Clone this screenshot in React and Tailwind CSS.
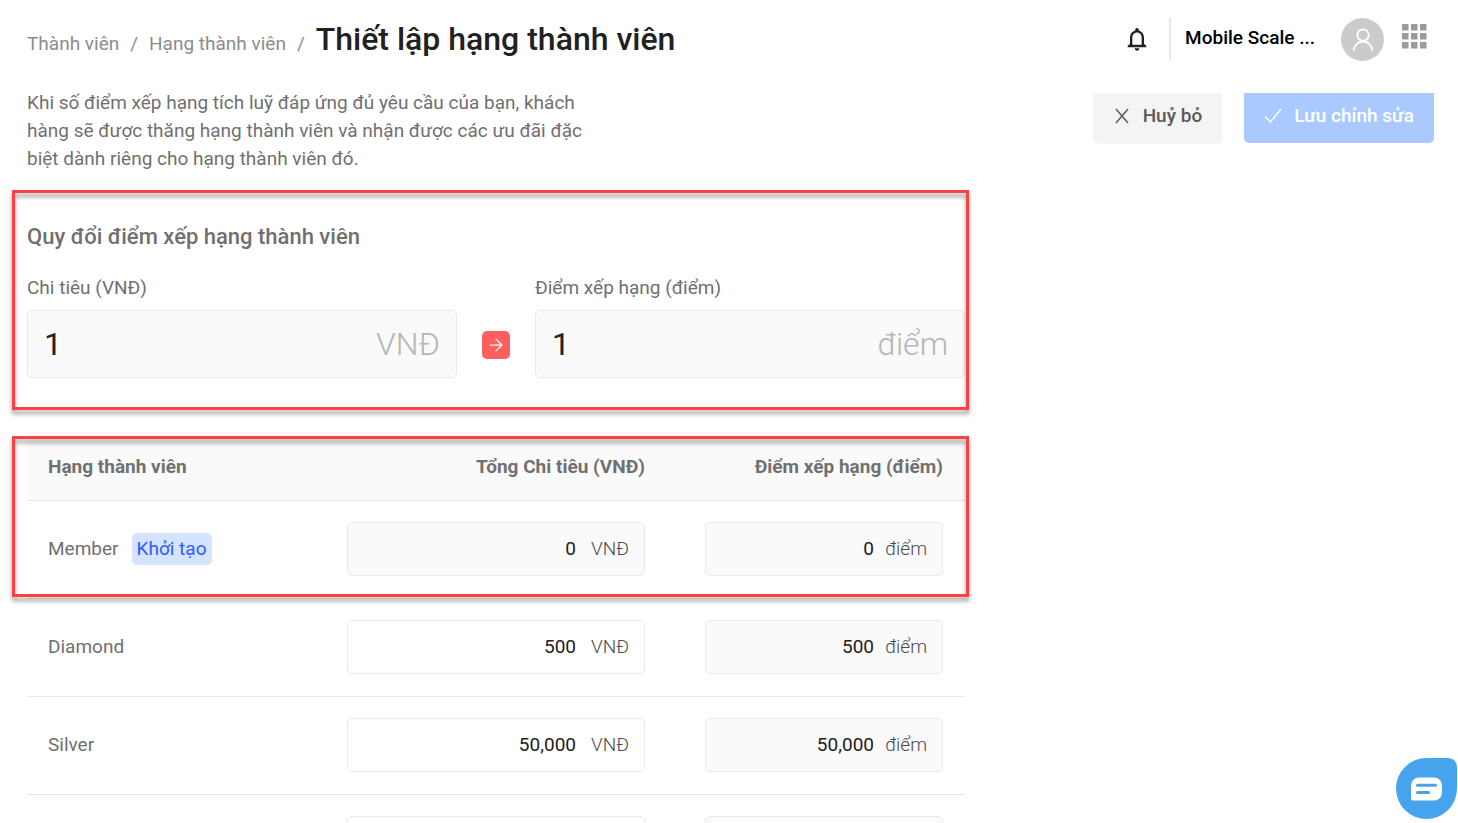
import { ArrowRight } from "lucide-react";
import { MdNotificationsNone } from "react-icons/md";

const tiers = [
  { id: "member", name: "Member", amount: "0", points: "0", initial: true },
  { id: "diamond", name: "Diamond", amount: "500", points: "500" },
  { id: "silver", name: "Silver", amount: "50,000", points: "50,000" },
  // blank row for the next tier
  { id: "new", name: "", amount: "", points: "" },
];

function Highlight({ className }) {
  return (
    <div
      aria-hidden="true"
      className={`pointer-events-none absolute border-3 border-[#ff4040] drop-shadow-[0_4px_2px_rgba(0,0,0,0.4)] ${className}`}
    />
  );
}

function AppsIcon() {
  const cells = [0, 9, 18];
  return (
    <svg width="25" height="25" viewBox="0 0 25 25" fill="#9b9b9b">
      {cells.map((y) =>
        cells.map((x) => <rect key={`${x}-${y}`} x={x} y={y} width="6.5" height="6.5" />)
      )}
    </svg>
  );
}

function Header() {
  return (
    <header className="flex items-start justify-between pl-[27px] pr-[31px] pt-[18px]">
      <nav className="flex items-baseline gap-[11px] text-[19px] text-[#8c8c8c]">
        <a href="#">Thành viên</a>
        <span>/</span>
        <a href="#">Hạng thành viên</a>
        <span>/</span>
        <h1 className="text-[32px] leading-[42px] font-medium text-[#212121]">
          Thiết lập hạng thành viên
        </h1>
      </nav>
      <div className="flex items-center">
        <button type="button" aria-label="Thông báo" className="pb-0.5">
          <MdNotificationsNone className="size-7 text-[#212121]" />
        </button>
        <div className="ml-[18px] h-[43px] w-0.5 bg-[#e8e8e8]" />
        <span className="ml-3.5 text-[19px] leading-7 font-medium text-black pb-1">
          Mobile Scale ...
        </span>
        <button
          type="button"
          aria-label="Tài khoản"
          className="ml-[26px] flex size-[43px] items-center justify-center rounded-full bg-[#cbcbcb] text-white"
        >
          <svg width="22" height="24" viewBox="0 0 22 24" fill="none" stroke="white" strokeWidth="1.8">
            <circle cx="11" cy="7" r="5.700" />
            <path d="M1.500 23a9.500 9.500 0 0 1 19 0" />
          </svg>
        </button>
        <button type="button" aria-label="Ứng dụng" className="ml-[18px] pb-1.5">
          <AppsIcon />
        </button>
      </div>
    </header>
  );
}

function Actions() {
  return (
    <div className="mt-1 flex shrink-0 gap-[22px]">
      <button
        type="button"
        className="flex h-[50px] items-center gap-3 rounded-b-[5px] bg-[#f4f4f4] px-5 pb-1 text-[19px] font-medium text-[#595959] shadow-[0_2px_1px_rgba(0,0,0,0.02)]"
      >
        <svg width="18" height="18" viewBox="0 0 18 18" fill="none" stroke="#595959" strokeWidth="1.5">
          <path d="M3 2l12 14M15 2L3 16" />
        </svg>
        Huỷ bỏ
      </button>
      <button
        type="button"
        className="flex h-[50px] items-center gap-3 rounded-b-[5px] bg-[#a9c9ff] px-5 pb-1 text-[19px] font-medium text-white"
      >
        <svg width="18" height="18" viewBox="0 0 18 18" fill="none" stroke="white" strokeWidth="1.5">
          <path d="M1 9.500l5.500 5.500L17 2" />
        </svg>
        Lưu chỉnh sửa
      </button>
    </div>
  );
}

function RateField({ id, label, unit }) {
  return (
    <div className="min-w-0 flex-1">
      <label htmlFor={id} className="block text-[19px] leading-7">
        {label}
      </label>
      <div className="mt-2 flex h-[68px] items-center rounded-[5px] border border-[#e6ebef] bg-[#fafafa] px-4 text-[32px]">
        <input id={id} defaultValue="1" className="w-0 min-w-0 flex-1 text-[#212121] outline-none" />
        <span className="font-light text-[#b5b5b5]">{unit}</span>
      </div>
    </div>
  );
}

function TierInput({ label, value, unit, className }) {
  return (
    <div
      className={`flex h-[54px] items-center rounded-[5px] border border-[#e6ebef] px-[15px] ${className}`}
    >
      <input
        aria-label={label}
        defaultValue={value}
        className="w-0 min-w-0 flex-1 text-right text-[#212121] outline-none"
      />
      {value && <span className="w-[53px] text-right font-light text-[#4a4a4a]">{unit}</span>}
    </div>
  );
}

function TierTable() {
  return (
    <table className="w-full table-fixed text-[19px] leading-7">
      <thead className="bg-[#fafafa]">
        <tr className="h-[68px] border-b border-[#e8e8e8]">
          <th className="w-[298px] px-[21px] pt-0.5 text-left font-bold">Hạng thành viên</th>
          <th className="px-[22px] pt-0.5 text-right font-bold">Tổng Chi tiêu (VNĐ)</th>
          <th className="w-[298px] px-[22px] pt-0.5 text-right font-bold">Điểm xếp hạng (điểm)</th>
        </tr>
      </thead>
      <tbody>
        {tiers.map((tier) => (
          <tr key={tier.id} className="h-[98px] border-b border-[#e8e8e8]">
            <td className="px-[21px]">
              <span>{tier.name}</span>
              {tier.initial && (
                <span className="ml-[13px] inline-block rounded-[5px] bg-[#d4e3ff] px-[5px] py-0.5 text-[#2f5bff]">
                  Khởi tạo
                </span>
              )}
            </td>
            <td className="px-[22px]">
              <TierInput
                label={`Tổng Chi tiêu ${tier.name}`}
                value={tier.amount}
                unit="VNĐ"
                className={tier.initial ? "bg-[#fafafa]" : "bg-white"}
              />
            </td>
            <td className="px-[22px]">
              <TierInput
                label={`Điểm xếp hạng ${tier.name}`}
                value={tier.points}
                unit="điểm"
                className="ml-auto w-[238px] bg-[#fafafa]"
              />
            </td>
          </tr>
        ))}
      </tbody>
    </table>
  );
}

function ChatButton() {
  return (
    <button
      type="button"
      aria-label="Chat"
      className="fixed right-px bottom-1 flex size-[61px] items-center justify-center bg-[#46a3ec] rounded-[31px] rounded-tr-[9px]"
    >
      <svg width="31" height="24" viewBox="0 0 31 24" fill="none">
        <path
          d="M8 0.500h15a8 8 0 0 1 8 8v7a8 8 0 0 1-8 8H2a2 2 0 0 1-2-2v-13a8 8 0 0 1 8-8z"
          fill="white"
        />
        <path d="M6.500 8.200h18M6.500 15.500h11" stroke="#46a3ec" strokeWidth="3" strokeLinecap="round" />
      </svg>
    </button>
  );
}

function App() {
  return (
    <div className="h-screen overflow-y-auto bg-white font-['Roboto',sans-serif] text-[#707070] [scrollbar-width:none]">
      <Header />
      <main className="pl-[27px] pr-6 pt-7">
        <div className="flex items-start justify-between gap-6">
          <p className="max-w-[570px] text-[19px] leading-7">
            Khi số điểm xếp hạng tích luỹ đáp ứng đủ yêu cầu của bạn, khách hàng sẽ được thăng
            hạng thành viên và nhận được các ưu đãi đặc biệt dành riêng cho hạng thành viên đó.
          </p>
          <Actions />
        </div>

        <div className="max-w-[938px]">
          <section className="relative mt-12">
            <h2 className="text-[22px] leading-8 font-medium">Quy đổi điểm xếp hạng thành viên</h2>
            <div className="mt-[21px] flex items-end">
              <RateField id="spend" label="Chi tiêu (VNĐ)" unit="VNĐ" />
              <div className="mx-[25px] mb-[19px] flex size-7 shrink-0 items-center justify-center rounded-[5px] bg-[#ff605e] text-white">
                <ArrowRight size={20} strokeWidth={1.5} />
              </div>
              <RateField id="points" label="Điểm xếp hạng (điểm)" unit="điểm" />
            </div>
            <Highlight className="-top-[31px] -right-1 -bottom-8 -left-[15px]" />
          </section>

          <section className="relative mt-[54px]">
            <TierTable />
            <Highlight className="top-1 -right-1 -left-[15px] h-[161px]" />
          </section>
        </div>
      </main>
      <ChatButton />
    </div>
  );
}

export default App;
